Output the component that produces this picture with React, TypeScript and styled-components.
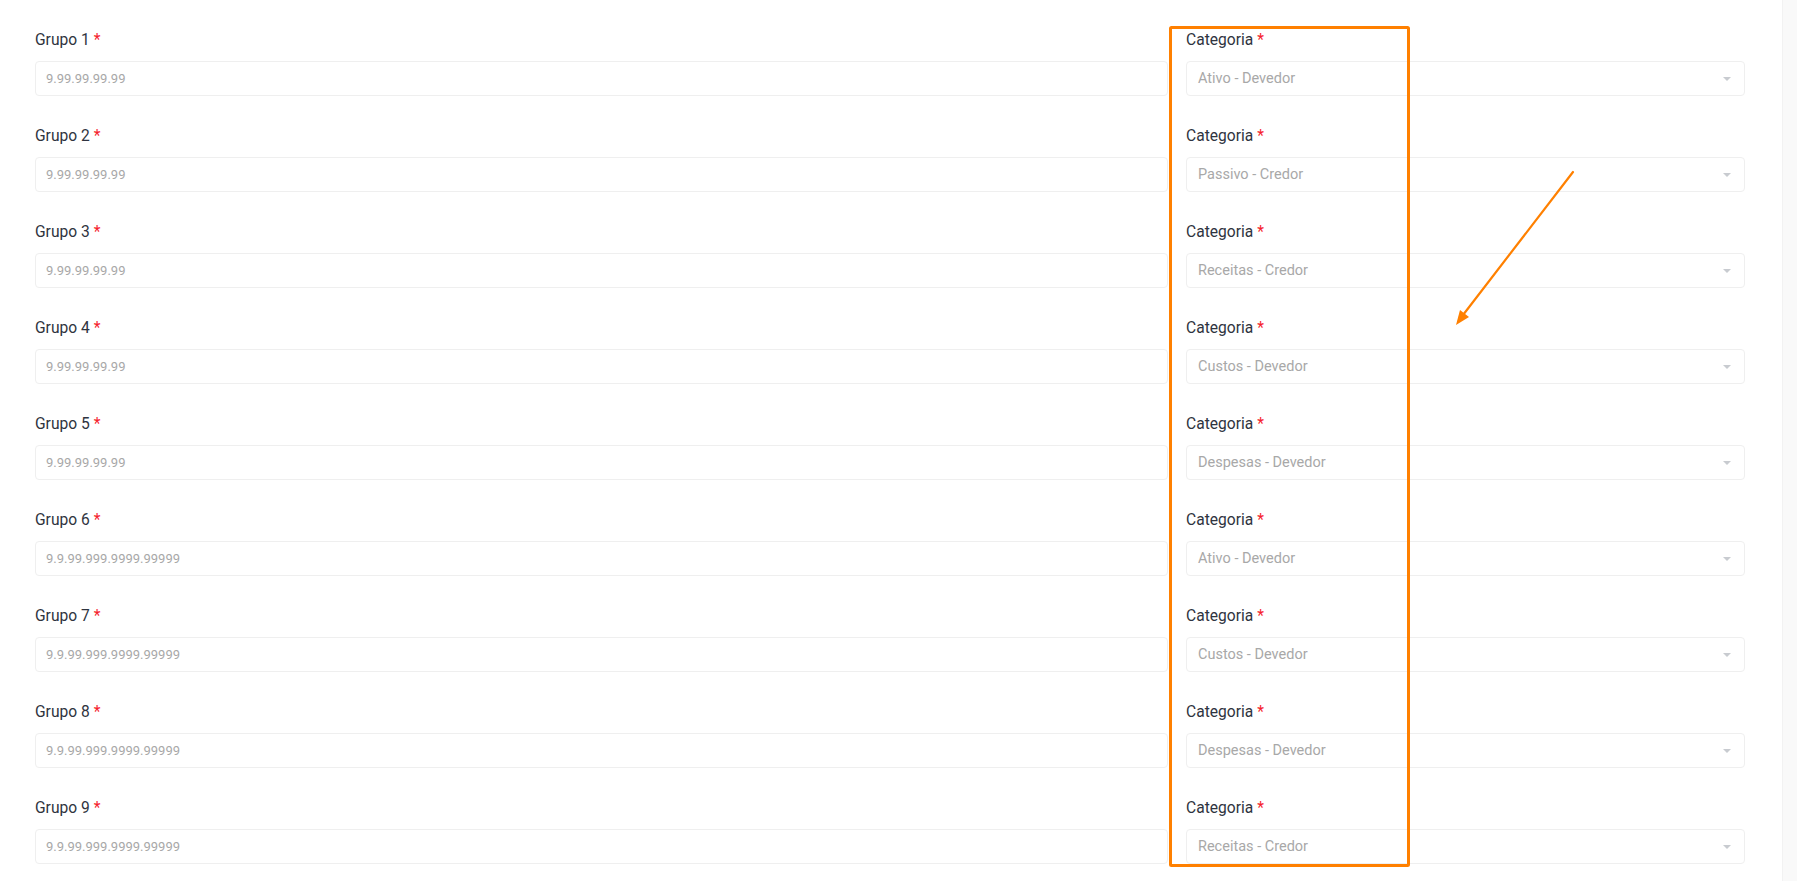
import React from 'react';
import styled, { createGlobalStyle } from 'styled-components';

const GlobalStyle = createGlobalStyle`
  html, body {
    margin: 0;
    padding: 0;
    background: #ffffff;
    font-family: Roboto, "Liberation Sans", Arial, sans-serif;
  }
  * {
    box-sizing: border-box;
  }
`;

const Page = styled.div`
  position: relative;
  display: flex;
  min-height: 100vh;
`;

const Content = styled.main`
  flex: 1;
  padding: 29px 37px 0 35px;
`;

const ScrollTrack = styled.div`
  width: 15px;
  background: #f9f9f9;
  box-shadow: inset 1px 0 0 #f2f2f2;
`;

const Row = styled.div`
  display: grid;
  grid-template-columns: minmax(0, 1133fr) minmax(0, 559fr);
  column-gap: 18px;
  height: 96px;
`;

const Field = styled.div`
  display: flex;
  flex-direction: column;
`;

const Label = styled.label`
  height: 22px;
  line-height: 22px;
  margin-bottom: 10px;
  font-size: 15.6px;
  color: #2f3440;
`;

const Required = styled.span`
  color: #f5222d;
  margin-left: 4px;
`;

const TextInput = styled.input`
  height: 35px;
  padding: 0 10px;
  border: 1px solid #efefef;
  border-radius: 4px;
  font-family: inherit;
  font-size: 13px;
  color: #606266;
  outline: none;

  &::placeholder {
    color: #a8a8a8;
  }
`;

const SelectBox = styled.div`
  display: flex;
  align-items: center;
  justify-content: space-between;
  height: 35px;
  padding: 0 13px 0 11px;
  border: 1px solid #efefef;
  border-radius: 4px;
  font-size: 14.5px;
  color: #a8a8a8;
  cursor: pointer;
`;

const Caret = styled.span`
  width: 0;
  height: 0;
  border-left: 4px solid transparent;
  border-right: 4px solid transparent;
  border-top: 4px solid #c8cbd0;
  margin-top: 1px;
`;

const Annotation = styled.svg`
  position: absolute;
  top: 0;
  left: 0;
  pointer-events: none;
`;

const rows = [
  { mask: '9.99.99.99.99', category: 'Ativo - Devedor' },
  { mask: '9.99.99.99.99', category: 'Passivo - Credor' },
  { mask: '9.99.99.99.99', category: 'Receitas - Credor' },
  { mask: '9.99.99.99.99', category: 'Custos - Devedor' },
  { mask: '9.99.99.99.99', category: 'Despesas - Devedor' },
  { mask: '9.9.99.999.9999.99999', category: 'Ativo - Devedor' },
  { mask: '9.9.99.999.9999.99999', category: 'Custos - Devedor' },
  { mask: '9.9.99.999.9999.99999', category: 'Despesas - Devedor' },
  { mask: '9.9.99.999.9999.99999', category: 'Receitas - Credor' },
];

export default function App() {
  return (
    <Page>
      <GlobalStyle />
      <Content>
        {rows.map((row, i) => (
          <Row key={i}>
            <Field>
              <Label>
                Grupo {i + 1}
                <Required>*</Required>
              </Label>
              <TextInput placeholder={row.mask} />
            </Field>
            <Field>
              <Label>
                Categoria
                <Required>*</Required>
              </Label>
              <SelectBox>
                <span>{row.category}</span>
                <Caret />
              </SelectBox>
            </Field>
          </Row>
        ))}
      </Content>
      <ScrollTrack />

      {/* highlight box + arrow drawn on top of the form */}
      <Annotation width="1797" height="881" viewBox="0 0 1797 881">
        <rect
          x="1170.5"
          y="27.5"
          width="238"
          height="838"
          fill="none"
          stroke="#ff8000"
          strokeWidth="3"
          rx="1"
        />
        <line
          x1="1573"
          y1="172"
          x2="1463"
          y2="315"
          stroke="#ff8000"
          strokeWidth="2.2"
          strokeLinecap="round"
        />
        <polygon points="1456,325 1469,317 1460,310" fill="#ff8000" />
      </Annotation>
    </Page>
  );
}
